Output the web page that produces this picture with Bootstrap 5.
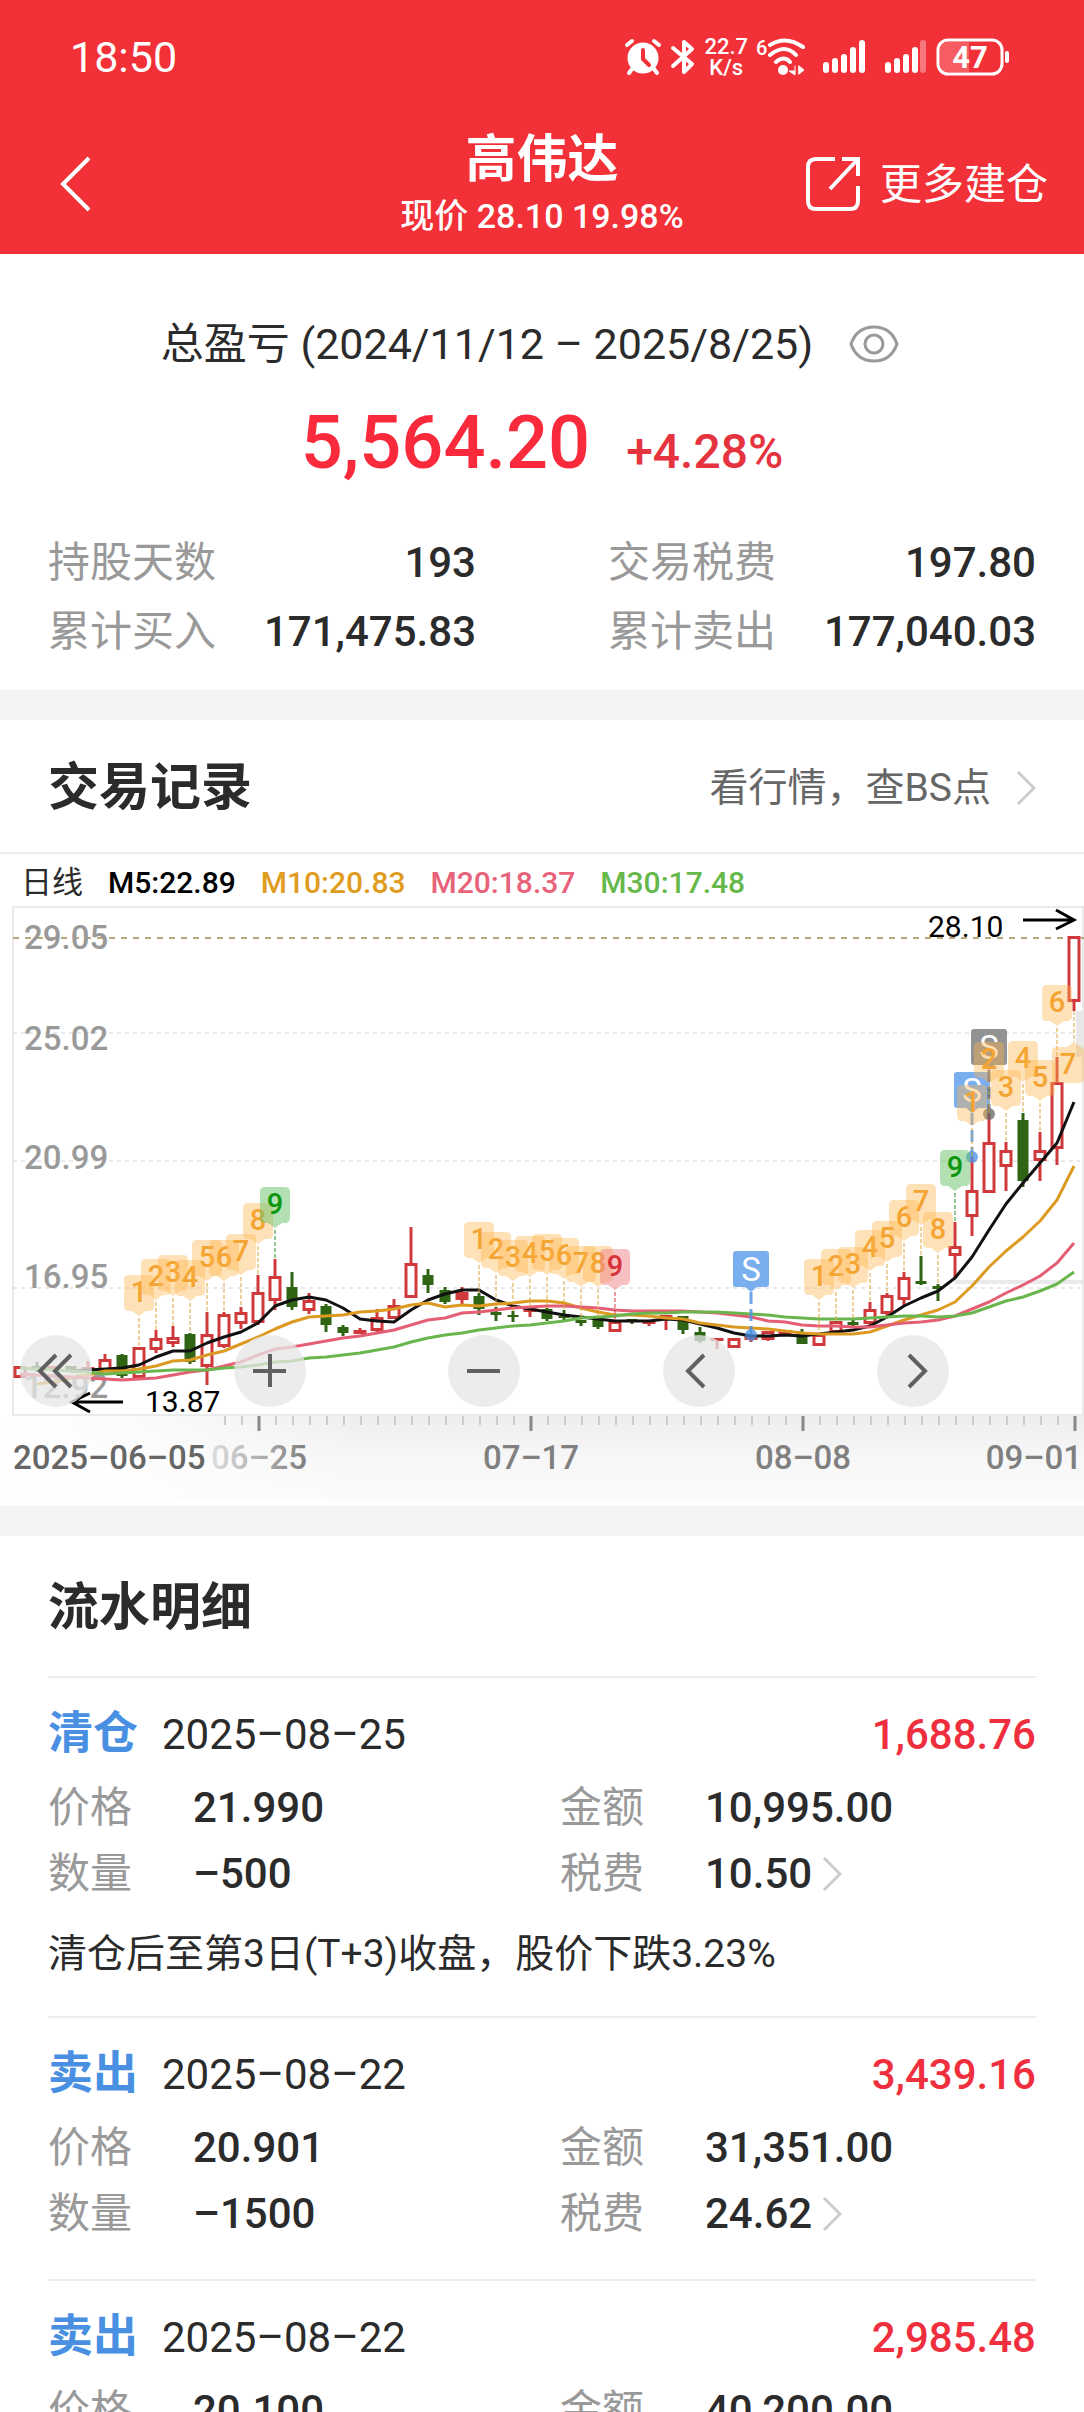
<!DOCTYPE html>
<html lang="zh-CN">
<head>
<meta charset="utf-8">
<meta name="viewport" content="width=device-width, initial-scale=1">
<title>高伟达</title>
<link href="https://cdn.jsdelivr.net/npm/bootstrap@5.3.0/dist/css/bootstrap.min.css" rel="stylesheet">
<style>
  body { font-family: Roboto, "Noto Sans CJK SC", sans-serif; font-size: 42px; color: #2b2b2b; background: #fff; }
  svg { display: block; flex: none; }
  a { color: inherit; text-decoration: none; }
  .top-area { background: #f23038; }
  .status-row { height: 114px; padding: 0 74px 0 70px; }
  .clock { font-size: 43px; }
  .net-speed { font-size: 22px; line-height: 21px; }
  .nav-row { height: 140px; padding: 0 36px; }
  .nav-side { flex: 1 1 0; }
  .nav-title { font-size: 51px; line-height: 60px; }
  .nav-sub { font-size: 34px; line-height: 52px; }
  .summary { padding: 60px 48px 24px; }
  .summary-title { font-size: 43px; line-height: 60px; gap: 36px; padding-right: 24px; }
  .summary-total { line-height: 84px; margin: 27px 0 43px; gap: 36px; color: #f92a3c; }
  .total-value { font-size: 74px; }
  .total-rate { font-size: 48px; line-height: 48px; color: #e5343f; }
  .stat-grid { display: grid; grid-template-columns: 1fr 1fr; column-gap: 132px; line-height: 69px; }
  .dim { color: #999; }
  .band { height: 30px; background: #f4f4f4; }
  .section-head { padding: 4px 48px 0; height: 132px; }
  .section-title { font-size: 51px; line-height: 60px; }
  .section-link { font-size: 39px; color: #666; gap: 25px; }
  .legend-row { height: 53px; border-top: 2px solid #eee; padding: 5px 21px 0; gap: 25px; font-size: 30px; line-height: 48px; }
  .legend-name { font-size: 31px; }
  .chart-box { padding-bottom: 6px; }
  .chart-tools { left: 20px; bottom: 99px; width: 85.7%; }
  .tool-btn { width: 72px; height: 72px; background: rgba(230,230,230,.76); }
  .detail-head { height: 140px; padding: 4px 48px 0; }
  .record { margin: 0 48px; border-top: 2px solid #eee; padding: 17px 0 32px; }
  .record-head { line-height: 80px; }
  .record-kind { font-size: 45px; line-height: 60px; color: #4a90e2; margin-right: 24px; }
  .gain { color: #f02f3e; }
  .record-grid { display: grid; grid-template-columns: 145px 367px 145px 1fr; line-height: 66px; }
  .fee-link { gap: 10px; }
  .record-note { font-size: 39px; line-height: 60px; margin: 17px 0 0; }
</style>
<script src="https://cdn.jsdelivr.net/npm/bootstrap@5.3.0/dist/js/bootstrap.bundle.min.js"></script>
</head>
<body>
<div class="vh-100 overflow-hidden">
<header class="top-area text-white">
  <div class="status-row d-flex align-items-center justify-content-between">
    <span class="clock">18:50</span>
    <div class="d-flex align-items-center">
      <svg width="38" height="38" viewBox="0 0 38 38" fill="none" stroke="#fff" stroke-width="4" stroke-linecap="round"><circle cx="19" cy="20" r="15.500" fill="#fff" stroke="none"/><path d="M3 7l5-4M35 7l-5-4M8 31l-3 4M30 31l3 4"/><path d="M19 12v9l6 6" stroke="#f23038" stroke-linejoin="round"/></svg>
      <svg class="ms-2" width="26" height="38" viewBox="0 0 26 38" fill="none" stroke="#fff" stroke-width="4" stroke-linecap="round" stroke-linejoin="round"><path d="M3 10L22 26l-8 8V4l8 7L3 28"/></svg>
      <div class="net-speed fw-medium text-center ms-2 me-2">22.7<br>K/s</div>
      <svg width="50" height="40" viewBox="0 0 50 40" fill="none" stroke="#fff" stroke-width="4" stroke-linecap="round"><text x="0" y="18" font-size="20" font-weight="500" fill="#fff" stroke="none">6</text><path d="M14 8Q30-2 47 10M14 18q15-12 26 0M20 25q8-7 14 0"/><circle cx="27" cy="33" r="5" fill="#fff" stroke="none"/><path d="M39 29v9l-6-4h6M43 29l5 4-5 4z" fill="#fff" stroke-width="1"/></svg>
      <svg class="ms-3" width="44" height="38" viewBox="0 0 44 38" stroke="#fff" stroke-width="6" stroke-linecap="round"><path d="M4 27v5M13 23v9M22 19v13M31 12v20M40 5v27"/></svg>
      <svg class="ms-3" width="44" height="38" viewBox="0 0 44 38" stroke="#fff" stroke-width="6" stroke-linecap="round"><path d="M6 27v5M15 23v9M24 19v13M33 12v20"/><path d="M41 5v27" opacity=".35"/></svg>
      <svg class="ms-2" width="76" height="40" viewBox="0 0 76 40"><rect x="4" y="3" width="64" height="34" rx="10" fill="none" stroke="#fff" stroke-width="3"/><path d="M14 5h21v30H14q-8 0-8-8V13q0-8 8-8z" fill="#fff" opacity=".22"/><path d="M73 16v8" stroke="#fff" stroke-width="4" stroke-linecap="round"/><text x="36" y="31" font-size="31" font-weight="700" fill="#fff" text-anchor="middle">47</text></svg>
    </div>
  </div>
  <nav class="nav-row d-flex align-items-center">
    <div class="nav-side d-flex"><a href="#" class="ms-4" aria-label="返回"><svg width="32" height="56" viewBox="0 0 32 56" fill="none" stroke="#fff" stroke-width="4"><path d="M29 2L3 28l26 26"/></svg></a></div>
    <div class="text-center pt-1">
      <h1 class="nav-title fw-bold m-0">高伟达</h1>
      <div class="nav-sub fw-medium">现价 28.10 19.98%</div>
    </div>
    <div class="nav-side d-flex justify-content-end">
      <a href="#" class="d-flex align-items-center gap-3"><svg width="60" height="58" viewBox="0 0 60 58" fill="none" stroke="#fff" stroke-width="4"><path d="M31 4H12q-8 0-8 8v34q0 8 8 8h34q8 0 8-8V31M38 4h16v17M54 4L26 34"/></svg><span>更多建仓</span></a>
    </div>
  </nav>
</header>

<section class="summary">
  <div class="summary-title d-flex justify-content-center align-items-center">
    <span>总盈亏 (2024/11/12 – 2025/8/25)</span>
    <svg width="50" height="38" viewBox="0 0 50 38" fill="none" stroke="#999" stroke-width="3"><path d="M2 19Q8 2 25 2t23 17q-6 17-23 17T2 19z"/><circle cx="25" cy="19" r="9"/></svg>
  </div>
  <div class="summary-total d-flex justify-content-center align-items-baseline fw-medium">
    <span class="total-value">5,564.20</span><span class="total-rate">+4.28%</span>
  </div>
  <div class="stat-grid">
    <div class="d-flex justify-content-between"><span class="dim">持股天数</span><span class="fw-medium">193</span></div>
    <div class="d-flex justify-content-between"><span class="dim">交易税费</span><span class="fw-medium">197.80</span></div>
    <div class="d-flex justify-content-between"><span class="dim">累计买入</span><span class="fw-medium">171,475.83</span></div>
    <div class="d-flex justify-content-between"><span class="dim">累计卖出</span><span class="fw-medium">177,040.03</span></div>
  </div>
</section>
<div class="band"></div>

<section>
  <div class="section-head d-flex justify-content-between align-items-center">
    <h2 class="section-title fw-bold m-0">交易记录</h2>
    <a href="#" class="section-link d-flex align-items-center"><span>看行情，查BS点</span><svg width="20" height="36" viewBox="0 0 20 36" fill="none" stroke="#ccc" stroke-width="3"><path d="M2 2l16 16L2 34"/></svg></a>
  </div>
  <div class="legend-row d-flex">
    <span class="legend-name">日线</span><span class="text-black fw-medium">M5:22.89</span><span class="fw-medium" style="color:#e09c20">M10:20.83</span><span class="fw-medium" style="color:#e8627a">M20:18.37</span><span class="fw-medium" style="color:#66b84a">M30:17.48</span>
  </div>
  <div class="chart-box position-relative">
    <svg id="kline" width="100%" viewBox="0 905 1084 595" role="img" aria-label="日线">
      <defs>
        <linearGradient id="axisShade" x1="0" y1="0" x2="0" y2="1"><stop offset="0" stop-color="#eee"/><stop offset=".5" stop-color="#f7f7f7"/><stop offset="1" stop-color="#fbfbfb"/></linearGradient>
        <linearGradient id="leftFade" gradientUnits="userSpaceOnUse" x1="0" y1="0" x2="360" y2="0"><stop offset="0" stop-color="#fff"/><stop offset=".4" stop-color="#fff" stop-opacity=".75"/><stop offset="1" stop-color="#fff" stop-opacity="0"/></linearGradient>
        <linearGradient id="dateFade" gradientUnits="userSpaceOnUse" x1="205" y1="0" x2="305" y2="0"><stop offset="0" stop-color="#e4e4e4"/><stop offset=".6" stop-color="#aaa"/><stop offset="1" stop-color="#808080"/></linearGradient>
      </defs>
      <rect x="0" y="1416" width="1084" height="84" fill="url(#axisShade)"/>
      <rect x="0" y="1416" width="360" height="84" fill="url(#leftFade)"/>
      <path d="M1084 907H13V1415H1084M1083 907V1415" fill="none" stroke="#eaeaea" stroke-width="2"/>
      <path d="M13 1033H1080M13 1161H1080M13 1288H1080" stroke="#e2e2e2" stroke-width="1.500" stroke-dasharray="4 4"/>
      <path d="M955 1282H1084" stroke="#eaeaea" stroke-width="4"/>
      <rect x="1076" y="1011" width="8" height="46" fill="#e8e8e8"/>
      <path d="M13 938H1084" stroke="#b9a97c" stroke-width="2" stroke-dasharray="6 6"/>
    </svg>
    <div class="chart-tools position-absolute d-flex justify-content-between">
      <button class="tool-btn btn rounded-circle border-0 p-0" aria-label="最早"><svg width="72" height="72" fill="none" stroke="#606060" stroke-width="4"><path d="M36 20L20 36l16 16M51 20L35 36l16 16"/></svg></button>
      <button class="tool-btn btn rounded-circle border-0 p-0" aria-label="放大"><svg width="72" height="72" stroke="#606060" stroke-width="4"><path d="M19 36h33M36 19v33"/></svg></button>
      <button class="tool-btn btn rounded-circle border-0 p-0" aria-label="缩小"><svg width="72" height="72" stroke="#606060" stroke-width="4"><path d="M19 36h33"/></svg></button>
      <button class="tool-btn btn rounded-circle border-0 p-0" aria-label="向前"><svg width="72" height="72" fill="none" stroke="#606060" stroke-width="4"><path d="M41 20L25 36l16 16"/></svg></button>
      <button class="tool-btn btn rounded-circle border-0 p-0" aria-label="向后"><svg width="72" height="72" fill="none" stroke="#606060" stroke-width="4"><path d="M32 20l16 16-16 16"/></svg></button>
    </div>
  </div>
</section>
<div class="band"></div>

<section>
  <div class="detail-head d-flex align-items-center"><h2 class="section-title fw-bold m-0">流水明细</h2></div>
  <article class="record">
    <div class="record-head d-flex align-items-baseline"><span class="record-kind fw-bold">清仓</span><span>2025–08–25</span><span class="gain fw-medium ms-auto">1,688.76</span></div>
    <div class="record-grid">
      <span class="dim">价格</span><span class="fw-medium">21.990</span><span class="dim">金额</span><span class="fw-medium">10,995.00</span>
      <span class="dim">数量</span><span class="fw-medium">–500</span><span class="dim">税费</span><a href="#" class="fee-link fw-medium d-flex align-items-center">10.50<svg width="20" height="36" viewBox="0 0 20 36" fill="none" stroke="#ccc" stroke-width="3"><path d="M2 2l16 16L2 34"/></svg></a>
    </div>
    <p class="record-note">清仓后至第3日(T+3)收盘，股价下跌3.23%</p>
  </article>
  <article class="record">
    <div class="record-head d-flex align-items-baseline"><span class="record-kind fw-bold">卖出</span><span>2025–08–22</span><span class="gain fw-medium ms-auto">3,439.16</span></div>
    <div class="record-grid">
      <span class="dim">价格</span><span class="fw-medium">20.901</span><span class="dim">金额</span><span class="fw-medium">31,351.00</span>
      <span class="dim">数量</span><span class="fw-medium">–1500</span><span class="dim">税费</span><a href="#" class="fee-link fw-medium d-flex align-items-center">24.62<svg width="20" height="36" viewBox="0 0 20 36" fill="none" stroke="#ccc" stroke-width="3"><path d="M2 2l16 16L2 34"/></svg></a>
    </div>
  </article>
  <article class="record">
    <div class="record-head d-flex align-items-baseline"><span class="record-kind fw-bold">卖出</span><span>2025–08–22</span><span class="gain fw-medium ms-auto">2,985.48</span></div>
    <div class="record-grid">
      <span class="dim">价格</span><span class="fw-medium">20.100</span><span class="dim">金额</span><span class="fw-medium">40,200.00</span>
    </div>
  </article>
</section>
</div>
<script>
(function () {
  var svg = document.getElementById('kline');
  function add(tag, attrs, text) {
    var e = document.createElementNS('http://www.w3.org/2000/svg', tag);
    for (var k in attrs) e.setAttribute(k, attrs[k]);
    if (text) e.textContent = text;
    svg.appendChild(e);
  }
  function X(i) { return 20 + 17 * i; }
  // axis ticks and labels
  for (var t = 12; t <= 62; t++) {
    var major = (t - 14) % 16 === 0;
    add('path', { d: 'M' + (X(t) + 1) + ' 1416v' + (major ? 15 : 9), stroke: major ? '#888' : '#ccc', 'stroke-width': major ? 3 : 2 });
  }
  [['2025–06–05', 13, 'start', '#666'], ['06–25', 259, 'middle', 'url(#dateFade)'], ['07–17', 531, 'middle', '#808080'], ['08–08', 803, 'middle', '#808080'], ['09–01', 1082, 'end', '#808080']].forEach(function (a) {
    add('text', { x: a[1], y: 1469, 'text-anchor': a[2], fill: a[3], 'font-size': 33, 'font-weight': 500 }, a[0]);
  });
  [['29.05', 949], ['25.02', 1050], ['20.99', 1169], ['16.95', 1288], ['12.92', 1398]].forEach(function (a) {
    add('text', { x: 24, y: a[1], fill: '#999', 'font-size': 33, 'font-weight': 500 }, a[0]);
  });
  // candles: kind (u hollow, f filled red, d green), high, top, bottom, low
  var C = ['u 1366 1366 1378 1378','d 1362 1366 1369 1372','f 1366 1366 1369 1369','d 1366 1366 1371 1372','f 1361 1367 1372 1372','u 1354 1359 1372 1372','d 1354 1355 1376 1378','u 1347 1347 1378 1378','u 1330 1338 1350 1353','u 1326 1337 1344 1347','d 1333 1334 1362 1364','u 1312 1334 1367 1385','u 1312 1314 1347 1348','u 1307 1312 1324 1329','u 1275 1292 1323 1325','u 1259 1276 1301 1310','d 1272 1287 1307 1310','u 1293 1300 1311 1314','d 1304 1306 1325 1332','d 1325 1327 1333 1336','f 1328 1330 1334 1334','u 1309 1317 1331 1334','u 1299 1305 1319 1319','u 1227 1263 1298 1298','d 1269 1275 1285 1293','d 1287 1290 1302 1304','f 1287 1292 1300 1305','d 1293 1296 1309 1315','d 1307 1312 1315 1321','d 1311 1315 1317 1322','f 1307 1308 1312 1317','d 1308 1309 1319 1321','d 1310 1316 1318 1320','d 1320 1320 1323 1326','d 1319 1319 1327 1329','u 1321 1321 1332 1332','d 1319 1319 1322 1324','f 1320 1320 1324 1326','f 1315 1315 1319 1330','d 1316 1316 1330 1334','d 1327 1332 1341 1343','f 1338 1338 1341 1349','u 1338 1338 1348 1348','f 1334 1336 1340 1342','u 1331 1331 1340 1341','f 1330 1330 1334 1335','d 1329 1332 1344 1344','u 1334 1334 1346 1346','u 1321 1321 1333 1335','d 1320 1322 1325 1326','u 1302 1309 1324 1325','u 1293 1295 1314 1318','u 1272 1277 1300 1306','d 1256 1281 1284 1285','d 1284 1286 1289 1301','u 1222 1246 1256 1278','u 1157 1190 1217 1236','u 1114 1142 1193 1193','u 1142 1150 1167 1191','d 1113 1120 1181 1187','u 1132 1150 1161 1181','u 1057 1082 1149 1165','u 936 936 1002 1011'].map(function (s) { return s.split(' '); });
  C.forEach(function (c, i) {
    var x = X(i), col = c[0] === 'd' ? '#2f6415' : '#d0393b', hi = +c[1], top = +c[2], bot = +c[3], lo = +c[4];
    add('path', { d: 'M' + x + ' ' + hi + 'V' + top + 'M' + x + ' ' + bot + 'V' + lo, stroke: col, 'stroke-width': 3 });
    if (c[0] === 'u') add('rect', { x: x - 5, y: top + 1.5, width: 10, height: bot - top - 3, fill: '#fff', stroke: col, 'stroke-width': 3 });
    else add('rect', { x: x - (c[0] === 'd' ? 5.5 : 6.5), y: top, width: c[0] === 'd' ? 11 : 13, height: bot - top, fill: col });
  });
  // moving averages, one value per candle from the given start
  function line(start, ys, col) {
    add('polyline', { points: ys.map(function (y, k) { return X(start + k) + ',' + y; }).join(' '), fill: 'none', stroke: col, 'stroke-width': 3, 'stroke-linejoin': 'round' });
  }
  line(3, [1371,1370,1369,1368,1365,1357,1351,1351,1343,1337,1332,1323,1306,1300,1297,1300,1308,1319,1321,1322,1310,1300,1294,1290,1290,1300,1306,1309,1312,1315,1317,1319,1321,1321,1321,1319,1320,1324,1328,1333,1336,1336,1335,1336,1334,1332,1330,1326,1317,1306,1298,1291,1278,1257,1230,1204,1183,1163,1143,1102], '#111');
  line(1, [1384,1382,1378,1375,1371,1371,1369,1366,1361,1360,1355,1351,1344,1337,1329,1322,1317,1316,1315,1312,1311,1309,1305,1303,1307,1305,1306,1304,1303,1301,1301,1303,1308,1312,1315,1315,1316,1318,1319,1323,1325,1327,1328,1329,1331,1333,1334,1334,1334,1332,1326,1320,1315,1310,1302,1286,1267,1251,1237,1221,1200,1166], '#dc9a22');
  line(0, [1374,1375,1376,1377,1378,1379,1380,1379,1378,1375,1372,1370,1366,1362,1355,1349,1347,1344,1341,1338,1336,1333,1330,1325,1320,1318,1313,1312,1310,1308,1307,1306,1306,1307,1308,1310,1311,1311,1311,1311,1312,1313,1315,1317,1321,1322,1325,1326,1326,1327,1327,1325,1323,1322,1320,1316,1309,1302,1293,1285,1276,1263,1243], '#e45f74');
  line(0, [1368,1369,1370,1371,1372,1374,1373,1372,1371,1370,1370,1370,1368,1367,1365,1362,1361,1358,1357,1355,1353,1350,1347,1342,1338,1335,1333,1330,1328,1326,1325,1323,1321,1318,1317,1316,1314,1313,1313,1312,1312,1312,1313,1314,1315,1317,1318,1319,1319,1319,1318,1317,1316,1316,1317,1316,1313,1307,1301,1297,1291,1284,1272], '#6ab64e');
  // sell markers: index, tip, dot, colour
  [[43, 1292, 1335, '#6ea8ee', '#4a90e2'], [56, 1113, 1157, '#6ea8ee', '#4a90e2'], [57, 1070, 1114, '#8a8a8a', '#666']].forEach(function (m) {
    var x = X(m[0]), y = m[1] - 41;
    add('path', { d: 'M' + x + ' ' + m[1] + 'V' + m[2], stroke: m[4], 'stroke-width': 3, 'stroke-dasharray': '12 5', opacity: .8 });
    add('circle', { cx: x, cy: m[2], r: 6, fill: m[4], opacity: .75 });
    add('path', { d: 'M' + (x - 15) + ' ' + y + 'h30q3 0 3 3v30q0 3-3 3h-9l-6 5-6-5h-9q-3 0-3-3v-30q0-3 3-3z', fill: m[3], opacity: .92 });
    add('text', { x: x, y: y + 30, 'text-anchor': 'middle', fill: '#fff', 'font-size': 33 }, 'S');
  });
  // sequence markers: index, tip, label
  [[7,1316,1],[8,1300,2],[9,1296,3],[10,1301,4],[11,1281,5],[12,1281,6],[13,1275,7],[14,1244,8],[15,1228,9,'g'],
   [27,1263,1],[28,1273,2],[29,1281,3],[30,1277,4],[31,1275,5],[32,1279,6],[33,1287,7],[34,1287,8],[35,1290,9,'r'],
   [47,1300,1],[48,1290,2],[49,1288,3],[50,1271,4],[51,1262,5],[52,1241,6],[53,1225,7],[54,1253,8],[55,1191,9,'g'],
   [56,1126,1],[57,1083,2],[58,1111,3],[59,1082,4],[60,1101,5],[61,1026,6]].forEach(function (m) {
    var x = X(m[0]), y = m[1] - 41, k = m[3];
    var bg = k === 'g' ? '#68c268' : k === 'r' ? '#f08488' : '#ffb54c', fg = k === 'g' ? '#0d960d' : k === 'r' ? '#d8333b' : '#f3a432';
    add('path', { d: 'M' + x + ' ' + (m[1] + 2) + 'V' + C[m[0]][1], stroke: k === 'g' ? '#2a8a2a' : k === 'r' ? '#d0393b' : '#dca53a', 'stroke-width': 1, 'stroke-dasharray': '4 2' });
    add('path', { d: 'M' + (x - 10) + ' ' + y + 'h20q5 0 5 5v26q0 5-5 5h-3l-7 5-7-5h-3q-5 0-5-5v-26q0-5 5-5z', fill: bg, opacity: k ? .5 : .4 });
    add('text', { x: x, y: y + 27, 'text-anchor': 'middle', fill: fg, 'font-size': 29, 'font-weight': 500 }, String(m[2]));
  });
  add('path', { d: 'M1074 1011V1042', stroke: '#dca53a', 'stroke-width': 1, 'stroke-dasharray': '4 2' });
  add('path', { d: 'M1057 1047h10l7-5 7 5q3 0 3 5v26q0 5-5 5h-22q-5 0-5-5v-26q0-5 5-5z', fill: '#ffb54c', opacity: .4 });
  add('text', { x: 1068, y: 1074, 'text-anchor': 'middle', fill: '#f3a432', 'font-size': 29, 'font-weight': 500 }, '7');
  // extreme prices
  add('text', { x: 928, y: 937, 'font-size': 30, fill: '#000' }, '28.10');
  add('text', { x: 145, y: 1412, 'font-size': 30, fill: '#000' }, '13.87');
  add('path', { d: 'M1023 920H1073M1056 910L1074 920L1056 929M123 1402H73M90 1393L72 1402L90 1412', fill: 'none', stroke: '#000', 'stroke-width': 3 });
})();
</script>
</body>
</html>
